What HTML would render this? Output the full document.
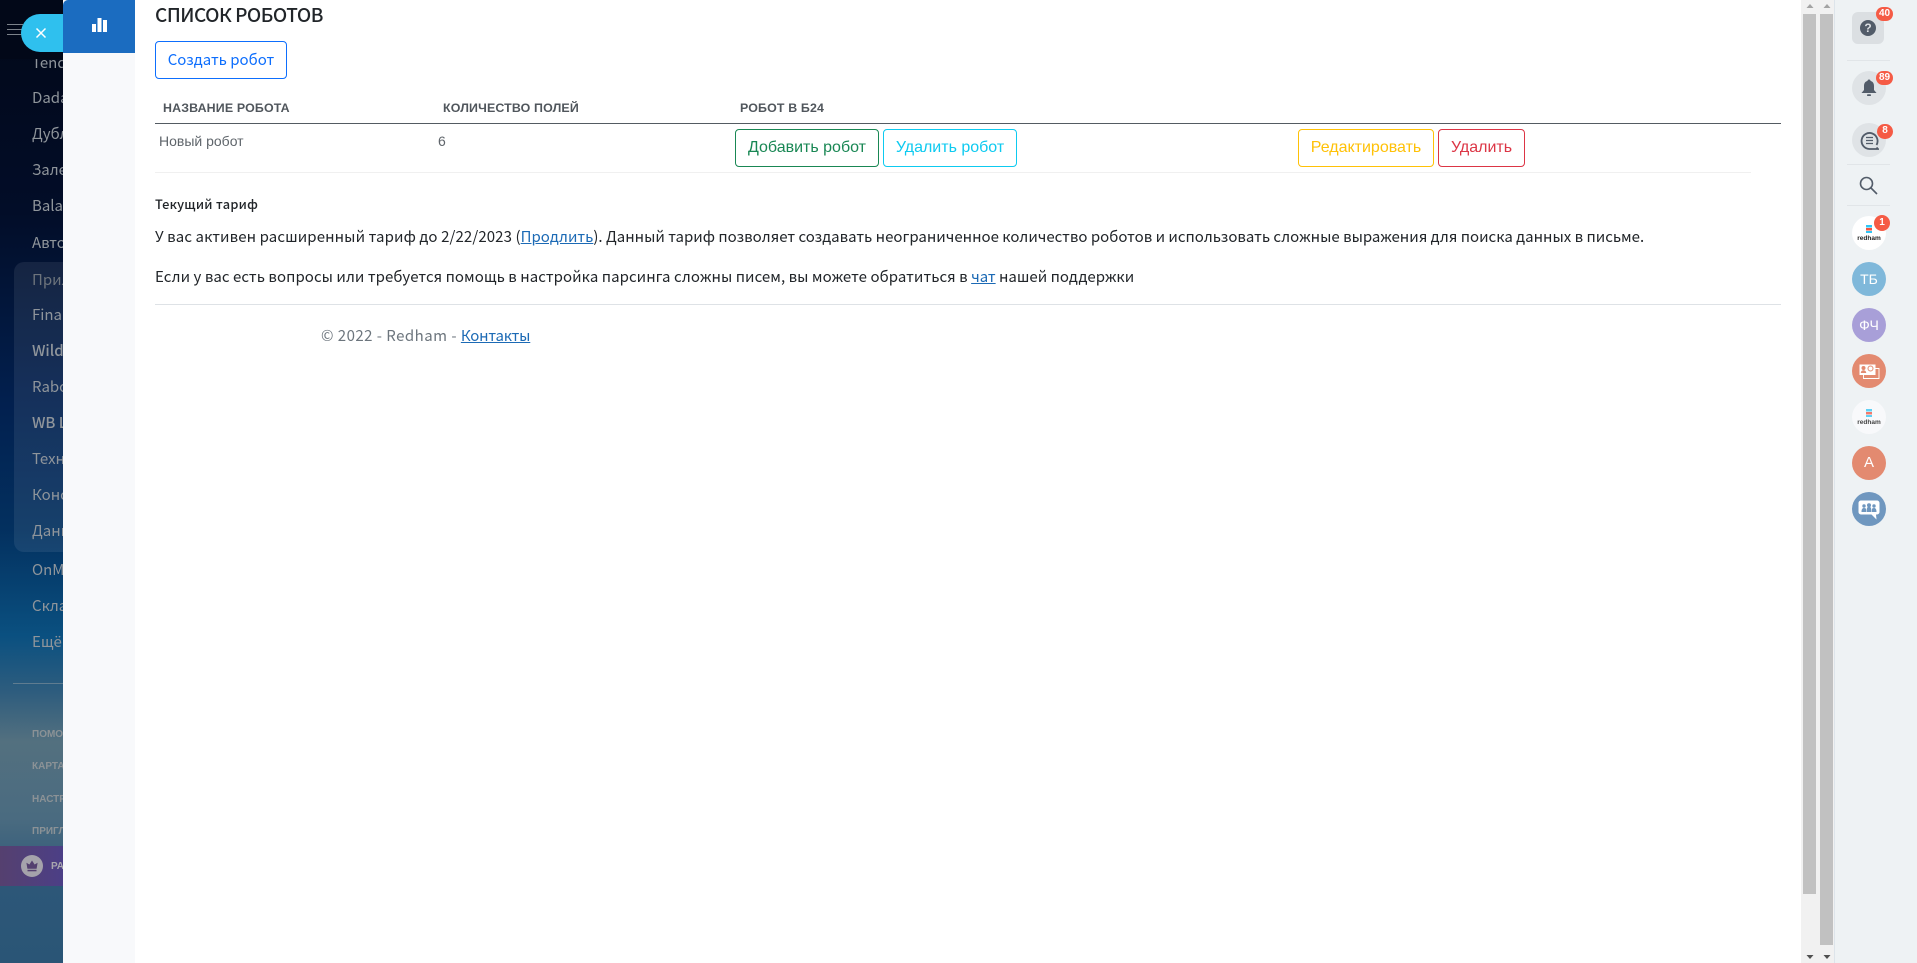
<!DOCTYPE html>
<html lang="ru"><head><meta charset="utf-8"><title>Список роботов</title>
<style>
html,body{margin:0;padding:0}
body{width:1917px;height:963px;overflow:hidden;position:relative;background:#fff;font-family:"Noto Sans CJK JP","Liberation Sans",sans-serif;color:#212529}
.a{position:absolute;white-space:nowrap;line-height:1}
#side{position:absolute;left:0;top:0;width:63px;height:963px;overflow:hidden;background:linear-gradient(180deg,#020818 0,#020d28 22%,#02204f 42%,#03305f 55%,#0a5080 66%,#2f5d7e 72%,#53707f 77%,#4a6b80 85%,#2d5778 92%,#2a5576 100%)}
#side .t{position:absolute;left:32px;color:#8f959b;font-size:15px;line-height:20px;white-space:nowrap;font-family:"Noto Sans CJK JP","Liberation Sans",sans-serif}
#side .s{position:absolute;left:32px;color:#8b9296;font-size:10px;font-weight:700;line-height:1;white-space:nowrap;font-family:"Liberation Sans",sans-serif}
.btn{position:absolute;box-sizing:border-box;border:1px solid;border-radius:4px;font:16px/36px "Liberation Sans",sans-serif;text-align:center;background:#fff;height:38px;white-space:nowrap}
.th{position:absolute;top:102px;font:700 12.400px/13px "Liberation Sans",sans-serif;letter-spacing:.15px;color:#50565c;white-space:nowrap}
.p{position:absolute;left:155px;font-size:15px;line-height:20px;white-space:nowrap;color:#212529}
.p a,.f a{color:#1c6ab5;text-decoration:underline}
.c{position:absolute;left:1852px;width:34px;height:34px;border-radius:50%;color:#fff;font:14px/34px "Liberation Sans",sans-serif;text-align:center}
.b{position:absolute;background:#f55b45;color:#fff;border-radius:8px;height:14px;font:700 10px/14px "Liberation Sans",sans-serif;text-align:center}
.sep{position:absolute;left:1847px;width:43px;height:1px;background:#e1e5e8}
</style></head><body>

<div id="side">
 <div class="t" style="top:53px">Tend</div>
 <div style="position:absolute;left:0;top:0;width:63px;height:59px;background:#020818"></div>
 <div class="t" style="top:88px">Dada</div>
 <div class="t" style="top:124px">Дубл</div>
 <div class="t" style="top:160px">Зале</div>
 <div class="t" style="top:196px">Balar</div>
 <div class="t" style="top:233px">Авто</div>
 <div style="position:absolute;left:14px;top:262px;width:60px;height:290px;border-radius:10px;background:rgba(255,255,255,.08)"></div>
 <div class="t" style="top:270px;color:#6d747c">Прил</div>
 <div class="t" style="top:305px">Finar</div>
 <div class="t" style="top:341px;font-weight:500">Wild</div>
 <div class="t" style="top:377px">Rabo</div>
 <div class="t" style="top:413px;font-weight:500">WB L</div>
 <div class="t" style="top:449px">Техн</div>
 <div class="t" style="top:485px">Конс</div>
 <div class="t" style="top:521px">Данн</div>
 <div class="t" style="top:560px">OnM</div>
 <div class="t" style="top:596px">Скла</div>
 <div class="t" style="top:632px">Ещё</div>
 <div style="position:absolute;left:13px;top:683px;width:50px;height:1px;background:#5f7c90"></div>
 <div class="s" style="top:730px">ПОМО</div>
 <div class="s" style="top:762px">КАРТА</div>
 <div class="s" style="top:795px">НАСТР</div>
 <div class="s" style="top:827px">ПРИГЛ</div>
 <div style="position:absolute;left:0;top:846px;width:63px;height:40px;background:linear-gradient(90deg,#55406f,#4c3f86)"></div>
 <div style="position:absolute;left:21px;top:855px;width:22px;height:22px;border-radius:50%;background:#a5a3ab"></div>
 <svg style="position:absolute;left:24px;top:859px" width="16" height="14" viewBox="0 0 16 14"><path d="M8 1.500l2.600 4 3-1.800-1 6H3.400l-1-6 3 1.800z" fill="#54406f"/><rect x="3.500" y="10.800" width="9" height="1.500" fill="#54406f"/></svg>
 <div class="s" style="top:862px;left:51px;color:#a9a7ae">РА</div>
 <div style="position:absolute;left:7px;top:24px;width:16px;height:1px;background:#7c828a;box-shadow:0 5px 0 #7c828a,0 10px 0 #7c828a"></div>
 <div style="position:absolute;left:21px;top:14px;width:50px;height:38px;border-radius:19px 0 0 19px;background:#2fc0ee"></div>
 <svg style="position:absolute;left:35px;top:27px" width="12" height="12" viewBox="0 0 12 12"><path d="M1.500 1.500l9 9M10.500 1.500l-9 9" stroke="#fff" stroke-width="1.500"/></svg>
</div>

<div style="position:absolute;left:63px;top:0;width:72px;height:963px;background:#f8f9fb"></div>
<div style="position:absolute;left:63px;top:0;width:72px;height:53px;background:#1b6cc0;border-top-left-radius:5px"></div>
<svg style="position:absolute;left:92px;top:18px" width="15" height="14" viewBox="0 0 15 14"><path d="M0 6h4v8H0zM5.500 0h4v14h-4zM11 2h4v12h-4z" fill="#fff"/></svg>

<div class="a" style="left:155px;top:4px;font-size:19px;line-height:22px;letter-spacing:-.45px;font-weight:500">СПИСОК РОБОТОВ</div>
<div class="btn" style="left:155px;top:41px;width:132px;border-color:#0d6efd;color:#0d6efd;font-family:'Noto Sans CJK JP','Liberation Sans',sans-serif;font-size:15px">Создать робот</div>

<div class="th" style="left:163px">НАЗВАНИЕ РОБОТА</div>
<div class="th" style="left:443px">КОЛИЧЕСТВО ПОЛЕЙ</div>
<div class="th" style="left:740px">РОБОТ В Б24</div>
<div style="position:absolute;left:155px;top:123px;width:1626px;height:1px;background:#545b62"></div>
<div class="a" style="left:159px;top:134px;font:14px/15px 'Liberation Sans',sans-serif;color:#5f656b">Новый робот</div>
<div class="a" style="left:438px;top:134px;font:14px/15px 'Liberation Sans',sans-serif;color:#5f656b">6</div>
<div class="btn" style="left:735px;top:129px;width:144px;border-color:#198754;color:#198754">Добавить робот</div>
<div class="btn" style="left:883px;top:129px;width:134px;border-color:#0dcaf0;color:#0dcaf0">Удалить робот</div>
<div class="btn" style="left:1298px;top:129px;width:136px;border-color:#ffc107;color:#ffc107">Редактировать</div>
<div class="btn" style="left:1438px;top:129px;width:87px;border-color:#dc3545;color:#dc3545">Удалить</div>
<div style="position:absolute;left:155px;top:172px;width:1596px;height:1px;background:#f0f0f0"></div>

<div class="a" style="left:155px;top:196px;font-size:12.800px;line-height:16px;font-weight:500;letter-spacing:.28px">Текущий тариф</div>
<div class="p" style="top:227px"><span style="letter-spacing:.1px">У вас активен расширенный тариф до 2/22/2023 (</span><a>Продлить</a>). Данный тариф позволяет создавать неограниченное количество роботов и использовать сложные выражения для поиска данных в письме.</div>
<div class="p" style="top:267px"><span style="letter-spacing:.058px">Если у вас есть вопросы или требуется помощь в настройка парсинга сложны писем, вы можете обратиться в </span><a>чат</a> нашей поддержки</div>
<div style="position:absolute;left:155px;top:304px;width:1626px;height:1px;background:#dee2e6"></div>
<div class="p f" style="left:321px;top:326px;color:#6c757d"><span style="letter-spacing:.47px">© 2022 - Redham - </span><a style="letter-spacing:-.2px">Контакты</a></div>

<div style="position:absolute;left:1801px;top:0;width:34px;height:963px;background:#f1f1f1;border-right:1px solid #dde4ea;box-sizing:border-box"></div>
<div style="position:absolute;left:1803px;top:14px;width:13px;height:880px;background:#c1c1c1"></div>
<div style="position:absolute;left:1820px;top:14px;width:13px;height:931px;background:#c1c1c1"></div>
<svg style="position:absolute;left:1801px;top:0" width="34" height="963"><path d="M5.500 8l3.500-4 3.500 4zM22.500 8l3.500-4 3.500 4z" fill="#a3a3a3"/><path d="M5.500 955l3.500 4 3.500-4zM22.500 955l3.500 4 3.500-4z" fill="#505050"/></svg>

<div style="position:absolute;left:1835px;top:0;width:82px;height:963px;background:#eef2f4"></div>
<div style="position:absolute;left:1852px;top:12px;width:32px;height:32px;border-radius:6px;background:#dbdfe2"></div>
<div style="position:absolute;left:1860px;top:20px;width:16px;height:16px;border-radius:50%;background:#525c69;color:#dbdfe2;font:700 12px/16px 'Liberation Sans',sans-serif;text-align:center">?</div>
<div class="b" style="left:1876px;top:7px;width:17px">40</div>
<div class="sep" style="top:60px"></div>
<div class="c" style="top:71px;background:#dfe3e6"></div>
<svg style="position:absolute;left:1861px;top:79px" width="16" height="18" viewBox="0 0 16 18"><path d="M8 .5c1 0 1.500.7 1.500 1.400C12 2.600 13 4.500 13 7v4l2.500 3H.5L3 11V7c0-2.500 1-4.400 3.500-5.100C6.500 1.200 7 .5 8 .5z" fill="#525c69"/><rect x="6" y="15.300" width="4" height="1.700" rx=".8" fill="#525c69"/></svg>
<div class="b" style="left:1876px;top:71px;width:17px">89</div>
<div class="c" style="top:123px;background:#dfe3e6"></div>
<svg style="position:absolute;left:1860px;top:131px" width="19" height="19" viewBox="0 0 19 19" fill="none" stroke="#525c69"><path d="M16.500 16.500l1.500 1.500h-8.500a8 8 0 1 1 7-4" stroke-width="1.800"/><path d="M6 6.500h7M6 9.500h7M6 12.500h7" stroke-width="1.200"/></svg>
<div class="b" style="left:1877px;top:124px;width:16px;height:15px;border-radius:8px">8</div>
<div class="sep" style="top:164px"></div>
<svg style="position:absolute;left:1859px;top:176px" width="19" height="19" viewBox="0 0 19 19" fill="none" stroke="#525c69" stroke-width="1.600"><circle cx="7.500" cy="7.500" r="6"/><path d="M12 12l6 6"/></svg>
<div class="sep" style="top:205px"></div>

<div class="c" style="top:216px;background:#fff"></div>
<div style="position:absolute;left:1866px;top:225px;width:6px;height:8px;background:linear-gradient(#2fc6f6 0 33%,#fff 33% 40%,#f4533f 40% 66%,#fff 66% 72%,#2fc6f6 72%)"></div>
<div class="a" style="left:1852px;width:34px;text-align:center;top:235px;font:700 6.500px/7px 'Liberation Sans',sans-serif;color:#222">redham</div>
<div class="b" style="left:1874px;top:215px;width:16px;height:16px;line-height:16px">1</div>

<div class="c" style="top:262px;background:#7fb8da">ТБ</div>
<div class="c" style="top:308px;background:#a89fd8">ФЧ</div>
<div class="c" style="top:354px;background:#e38a70"></div>
<svg style="position:absolute;left:1859px;top:364px" width="21" height="15" viewBox="0 0 21 15"><path d="M4.500 4.500h15.500v10H4.500z" fill="none" stroke="#fff" stroke-width=".9"/><rect x=".5" y=".5" width="16" height="10.500" fill="#fff"/><circle cx="4.500" cy="4" r="2" fill="#e38a70"/><path d="M1.800 9c0-2 1.500-2.800 2.700-2.800S7.200 7 7.200 9z" fill="#e38a70"/><circle cx="11.500" cy="4.500" r="2.500" fill="none" stroke="#e38a70"/></svg>
<div class="c" style="top:400px;background:#f8f9fb"></div>
<div style="position:absolute;left:1866px;top:409px;width:6px;height:8px;background:linear-gradient(#5fd0f5 0 33%,#fff 33% 40%,#f07a6c 40% 66%,#fff 66% 72%,#5fd0f5 72%)"></div>
<div class="a" style="left:1852px;width:34px;text-align:center;top:419px;font:700 6.500px/7px 'Liberation Sans',sans-serif;color:#444">redham</div>
<div class="c" style="top:446px;background:#e38a70;font-size:15px">А</div>
<div class="c" style="top:492px;background:#6f97bf"></div>
<svg style="position:absolute;left:1858px;top:500px" width="22" height="21" viewBox="0 0 22 21"><path d="M3 .5h16a2.500 2.500 0 0 1 2.500 2.500v9a2.500 2.500 0 0 1-2.500 2.500h-1l.5 5-5-5H3A2.500 2.500 0 0 1 .5 12V3A2.500 2.500 0 0 1 3 .5z" fill="#fff"/><g fill="#6f97bf"><circle cx="6" cy="6" r="1.700"/><circle cx="11" cy="5.200" r="2"/><circle cx="16" cy="6" r="1.700"/><path d="M3.500 12c0-3 1-4 2.500-4s2 .5 2 1v3zM8.500 12c0-4 1-5.500 2.500-5.500s2.500 1.500 2.500 5.500zM14 12V9c0-.5.500-1 2-1s2.500 1 2.500 4z"/></g></svg>
</body></html>
